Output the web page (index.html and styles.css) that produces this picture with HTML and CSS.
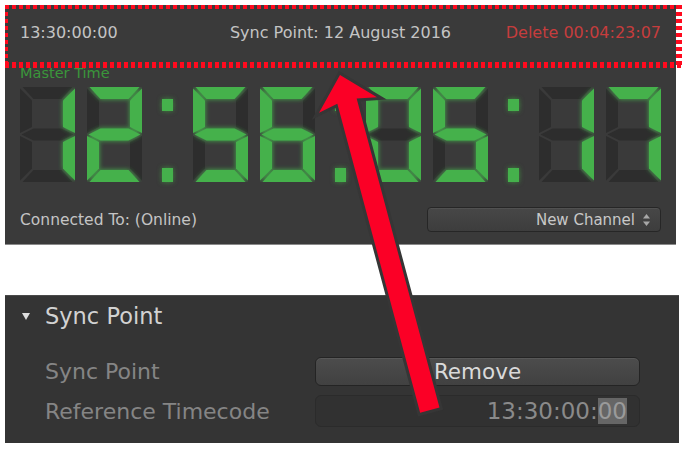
FILE: index.html
```html
<!DOCTYPE html>
<html>
<head>
<meta charset="utf-8">
<link rel="stylesheet" href="styles.css">
</head>
<body>
<svg class="defs" width="0" height="0" aria-hidden="true">
  <defs>
    <polygon id="sa" points="2.5,0 52.5,0 41.5,12 13.5,12"/>
    <polygon id="sb" points="55,1.5 55,46 43,40 43,13.5"/>
    <polygon id="sc" points="55,49 55,93.5 43,81.5 43,55"/>
    <polygon id="sd" points="13.5,83 41.5,83 52.5,95 2.5,95"/>
    <polygon id="se" points="0,49 12,55 12,81.5 0,93.5"/>
    <polygon id="sf" points="0,1.5 12,13.5 12,40 0,46"/>
    <polygon id="sg" points="1.5,47.5 13.5,41.5 41.5,41.5 53.5,47.5 41.5,53.5 13.5,53.5"/>
    <filter id="glow" x="-40%" y="-40%" width="180%" height="180%">
      <feGaussianBlur in="SourceGraphic" stdDeviation="2.5" result="b"/>
      <feMerge><feMergeNode in="b"/><feMergeNode in="SourceGraphic"/></feMerge>
    </filter>
  </defs>
</svg>

<div class="page">
  <section class="clock-panel">
    <div class="info-bar">
      <span class="info-left">13:30:00:00</span>
      <span class="info-center">Sync Point: 12 August 2016</span>
      <span class="info-right">Delete 00:04:23:07</span>
    </div>
    <div class="master-label">Master Time</div>

    <div class="lcd">
      <div class="pair">
        <svg class="digit" viewBox="0 0 55 95"><g class="ghost"><use href="#sa"/><use href="#sd"/><use href="#se"/><use href="#sf"/><use href="#sg"/></g><g class="lit"><use href="#sb"/><use href="#sc"/></g></svg>
        <svg class="digit" viewBox="0 0 55 95"><g class="ghost"><use href="#sc"/><use href="#sf"/></g><g class="lit"><use href="#sa"/><use href="#sb"/><use href="#sg"/><use href="#se"/><use href="#sd"/></g></svg>
      </div>
      <div class="sep"><span class="dot top"></span><span class="dot bottom"></span></div>
      <div class="pair">
        <svg class="digit" viewBox="0 0 55 95"><g class="ghost"><use href="#sb"/><use href="#se"/></g><g class="lit"><use href="#sa"/><use href="#sf"/><use href="#sg"/><use href="#sc"/><use href="#sd"/></g></svg>
        <svg class="digit" viewBox="0 0 55 95"><g class="ghost"><use href="#sb"/></g><g class="lit"><use href="#sa"/><use href="#sf"/><use href="#sg"/><use href="#se"/><use href="#sc"/><use href="#sd"/></g></svg>
      </div>
      <div class="sep"><span class="dot top"></span><span class="dot bottom"></span></div>
      <div class="pair">
        <svg class="digit" viewBox="0 0 55 95"><g class="ghost"><use href="#sg"/></g><g class="lit"><use href="#sa"/><use href="#sb"/><use href="#sc"/><use href="#sd"/><use href="#se"/><use href="#sf"/></g></svg>
        <svg class="digit" viewBox="0 0 55 95"><g class="ghost"><use href="#sb"/><use href="#se"/></g><g class="lit"><use href="#sa"/><use href="#sf"/><use href="#sg"/><use href="#sc"/><use href="#sd"/></g></svg>
      </div>
      <div class="sep"><span class="dot top"></span><span class="dot bottom"></span></div>
      <div class="pair">
        <svg class="digit" viewBox="0 0 55 95"><g class="ghost"><use href="#sa"/><use href="#sd"/><use href="#se"/><use href="#sf"/><use href="#sg"/></g><g class="lit"><use href="#sb"/><use href="#sc"/></g></svg>
        <svg class="digit" viewBox="0 0 55 95"><g class="ghost"><use href="#sd"/><use href="#se"/><use href="#sf"/><use href="#sg"/></g><g class="lit"><use href="#sa"/><use href="#sb"/><use href="#sc"/></g></svg>
      </div>
    </div>

    <div class="status-row">
      <span class="status-text">Connected To: (Online)</span>
      <div class="select">
        <span>New Channel</span>
        <svg class="updown" viewBox="0 0 7 12" width="7" height="12"><polygon points="3.5,0 7,4.5 0,4.5"/><polygon points="0,7.5 7,7.5 3.5,12"/></svg>
      </div>
    </div>
  </section>

  <section class="inspector">
    <div class="insp-header">
      <svg class="disclosure" viewBox="0 0 8 7" width="8" height="7"><polygon points="0,0 8,0 4,7"/></svg>
      <span>Sync Point</span>
    </div>
    <div class="insp-grid">
      <span class="insp-label">Sync Point</span>
      <button class="btn">Remove</button>
      <span class="insp-label">Reference Timecode</span>
      <div class="tc-field">13:30:00:<span class="tc-sel">00</span></div>
    </div>
  </section>

  <svg class="annot" width="684" height="450" viewBox="0 0 684 450" aria-hidden="true">
    <g class="dashes">
      <line x1="5" y1="7" x2="682" y2="7" stroke-width="4"/>
      <line x1="5" y1="65" x2="682" y2="65" stroke-width="6"/>
      <line x1="6.5" y1="5" x2="6.5" y2="68" stroke-width="3"/>
      <line x1="679" y1="5" x2="679" y2="68" stroke-width="6" stroke-dasharray="3 4"/>
    </g>
    <polygon class="arrow" transform="translate(340,75) rotate(-15)" points="0,0 30,31 10,27 10,347 -10,347 -10,27 -30,31"/>
  </svg>
</div>
</body>
</html>
```

FILE: styles.css
```css
* { box-sizing: border-box; }

html, body {
  margin: 0;
  padding: 0;
  background: #ffffff;
}

body {
  font-family: "DejaVu Sans", "Liberation Sans", sans-serif;
  width: 684px;
  height: 450px;
  overflow: hidden;
}

.defs {
  position: absolute;
  width: 0;
  height: 0;
}

.page {
  position: relative;
  width: 684px;
  height: 450px;
  padding: 5px 0 0 5px;
}

/* ---------- clock panel ---------- */
.clock-panel {
  width: 671px;
  height: 240px;
  background: #3a3a3a;
  border-bottom: 1px solid #8a8a8a;
  padding: 0 15px;
  display: flex;
  flex-direction: column;
}

.info-bar {
  height: 54px;
  display: grid;
  grid-template-columns: 1fr auto 1fr;
  align-items: center;
  font-size: 16px;
  color: #c4c4c4;
}

.info-right {
  justify-self: end;
  color: #c63d3d;
}

.master-label {
  margin-top: 6px;
  height: 16px;
  line-height: 16px;
  font-size: 14.5px;
  color: #3a963a;
}

.lcd {
  margin-top: 6px;
  height: 95px;
  display: flex;
}

.pair {
  display: flex;
  gap: 12px;
}

.digit {
  width: 55px;
  height: 95px;
  display: block;
}

.ghost { fill: #2d2d2d; }

.lit {
  fill: #45b14c;
  filter: url(#glow);
}

.sep {
  width: 11px;
  margin: 0 20px;
  display: flex;
  flex-direction: column;
  justify-content: space-between;
  padding: 12px 0 0;
}

.dot {
  display: block;
  width: 11px;
  background: #45b14c;
  box-shadow: 0 0 5px rgba(70, 200, 70, 0.55);
}

.dot.top { height: 12px; }
.dot.bottom { height: 14px; }

.status-row {
  margin-top: 25px;
  height: 25px;
  display: flex;
  align-items: center;
  justify-content: space-between;
}

.status-text {
  font-size: 15.5px;
  color: #c4c4c4;
}

.select {
  width: 234px;
  height: 25px;
  border-radius: 4px;
  border: 1px solid #262626;
  background: linear-gradient(#474747, #3d3d3d);
  box-shadow: inset 0 1px 0 rgba(255, 255, 255, 0.06);
  display: flex;
  align-items: center;
  justify-content: flex-end;
  gap: 8px;
  padding-right: 10px;
  font-size: 15px;
  color: #c8c8c8;
}

.updown { fill: #a8a8a8; }

/* ---------- inspector ---------- */
.inspector {
  margin-top: 50px;
  width: 674px;
  height: 148px;
  background: #343434;
  border-top: 1px solid #4a4a4a;
}

.insp-header {
  height: 40px;
  display: flex;
  align-items: center;
  padding-left: 17px;
  gap: 15px;
  font-size: 22.5px;
  color: #d2d2d2;
}

.disclosure { fill: #dedede; }

.insp-grid {
  margin-top: 21px;
  padding-left: 40px;
  display: grid;
  grid-template-columns: 270px 325px;
  grid-template-rows: 29px 32px;
  row-gap: 9px;
  align-items: center;
}

.insp-label {
  font-size: 22px;
  color: #858585;
}

.btn {
  height: 29px;
  border-radius: 6px;
  border: 1px solid #242424;
  background: linear-gradient(#4c4c4c, #414141);
  box-shadow: inset 0 1px 0 rgba(255, 255, 255, 0.07);
  font-family: "DejaVu Sans", "Liberation Sans", sans-serif;
  font-size: 21.5px;
  color: #dadada;
  padding: 0;
}

.tc-field {
  height: 32px;
  border-radius: 6px;
  border: 1px solid #2b2b2b;
  background: #313131;
  text-align: right;
  padding-right: 12px;
  font-size: 23px;
  line-height: 30px;
  color: #8a8a8a;
}

.tc-sel {
  background: #666666;
  color: #9a9a9a;
}

/* ---------- annotation overlay ---------- */
.annot {
  position: absolute;
  top: 0;
  left: 0;
  pointer-events: none;
}

.dashes line {
  stroke: #ff0a1e;
  stroke-dasharray: 4 3;
}

.arrow {
  fill: #fb0026;
  stroke: #363636;
  stroke-width: 6;
  stroke-linejoin: miter;
  paint-order: stroke;
}
```
